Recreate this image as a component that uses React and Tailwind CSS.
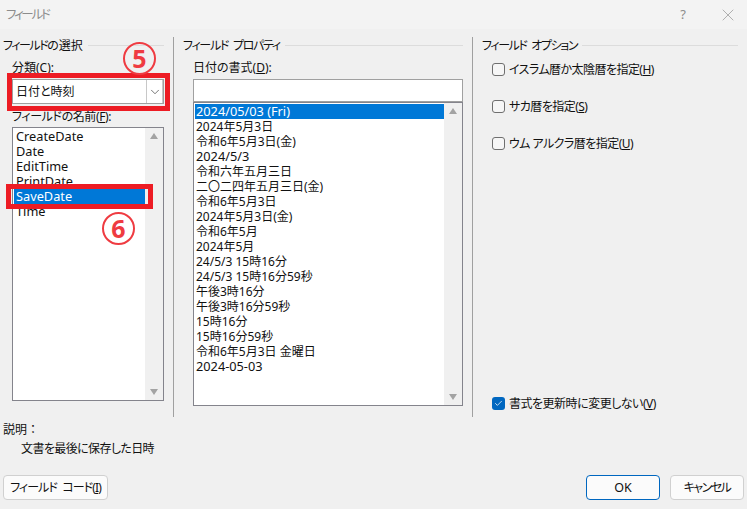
import { X, ChevronDown, Check } from 'lucide-react';

const names = ['CreateDate', 'Date', 'EditTime', 'PrintDate', 'SaveDate', 'Time'];
const formats = [
  '2024/05/03 (Fri)',
  '2024年5月3日',
  '令和6年5月3日(金)',
  '2024/5/3',
  '令和六年五月三日',
  '二〇二四年五月三日(金)',
  '令和6年5月3日',
  '2024年5月3日(金)',
  '令和6年5月',
  '2024年5月',
  '24/5/3 15時16分',
  '24/5/3 15時16分59秒',
  '午後3時16分',
  '午後3時16分59秒',
  '15時16分',
  '15時16分59秒',
  '令和6年5月3日 金曜日',
  '2024-05-03',
];

function GroupTitle({ children }) {
  return (
    <div className="flex h-[15px] items-center gap-[5px]">
      <span className="whitespace-nowrap">{children}</span>
      <span className="h-px flex-1 bg-[#dcdcdc]" />
    </div>
  );
}

function ScrollBar() {
  return (
    <div className="flex w-[18px] flex-col items-center justify-between bg-[#f0f0f0] py-[5px]">
      <span className="h-0 w-0 border-x-[4px] border-b-[6px] border-x-transparent border-b-[#a3a3a3]" />
      <span className="h-0 w-0 border-x-[4px] border-t-[6px] border-x-transparent border-t-[#a3a3a3]" />
    </div>
  );
}

function Option({ label, keyName, className = '' }) {
  return (
    <div className={`flex h-[15px] items-center gap-[4px] ${className}`}>
      <span className="h-[13px] w-[13px] rounded-[3px] border border-[#6f6f6f] bg-[#f6f6f6]" />
      <span className="whitespace-nowrap tracking-[-0.55px]">
        {label}(<u>{keyName}</u>)
      </span>
    </div>
  );
}

export default function App() {
  return (
    <div className="relative h-[509px] w-[747px] overflow-hidden bg-[#f0f0f0] text-[12px] leading-[15px] text-[#111] [font-family:'Noto_Sans','Noto_Sans_CJK_JP',sans-serif] [font-feature-settings:'palt']">
      {/* title bar */}
      <div className="flex h-[29px] items-center justify-between bg-[#f3f3f3] pl-[6px] pr-[9px]">
        <span className="text-[12.5px] tracking-[-2.2px] text-[#8c8c8c]">フィールド</span>
        <div className="flex items-center gap-[32px] text-[#8c8c8c]">
          <span className="text-[13px]">?</span>
          <X className="h-[20px] w-[20px]" strokeWidth={0.8} />
        </div>
      </div>

      <div className="flex h-[388px] pt-[8px]">
        {/* left */}
        <div className="w-[173px] pl-[3px] pr-[9px] pt-[1px]">
          <GroupTitle>
            <span className="tracking-[-1.5px]">フィールド</span>の選択
          </GroupTitle>
          <div className="pl-[9px] pt-[7px]">
            <div className="h-[15px]">
              分類(<u>C</u>):
            </div>
            <div className="mt-[4px] flex h-[25px] w-[152px] items-center justify-between border border-[#a0a0a0] bg-white pl-[3px]">
              <span className="-mt-[1px]">日付と時刻</span>
              <span className="flex h-[23px] w-[17px] items-center justify-center border-x border-[#c8c8c8]">
                <ChevronDown className="h-[14px] w-[14px] text-[#444]" strokeWidth={1.25} />
              </span>
            </div>
            <div className="mt-[5px] h-[15px] tracking-[-0.4px]">
              フィールドの名前(<u>F</u>):
            </div>
            <div className="mt-[3px] flex h-[274px] w-[152px] border border-[#84848c] bg-white">
              <div className="flex-1 pl-[1px] pt-[1px]">
                {names.map((name) => (
                  <div
                    key={name}
                    className={`h-[15px] pl-[2px] text-[12.75px] leading-[15px] ${name === 'SaveDate' ? 'bg-[#0078d7] text-white' : ''}`}
                  >
                    {name}
                  </div>
                ))}
              </div>
              <ScrollBar />
            </div>
          </div>
        </div>

        {/* middle */}
        <div className="h-[380px] w-[299px] border-l border-[#a0a0a0] pl-[9px] pr-[9px] pt-[1px]">
          <GroupTitle>
            <span className="tracking-[-1.3px] [word-spacing:3px]">フィールド プロパティ</span>
          </GroupTitle>
          <div className="pl-[10px] pt-[7px]">
            <div className="h-[15px]">
              日付の書式(<u>D</u>):
            </div>
            <div className="mt-[4px] h-[23px] w-[270px] border border-[#a0a0a0] bg-white" />
            <div className="flex h-[304px] w-[270px] border border-[#84848c] bg-white">
              <div className="flex-1 pl-[1px] pt-[1px]">
                {formats.map((format, i) => (
                  <div
                    key={format}
                    className={`h-[15px] pl-[1px] ${i === 0 || i === 3 || i === 17 ? 'text-[12.75px] leading-[14px]' : 'leading-[16px]'} ${i === 0 ? 'bg-[#0078d7] text-white' : ''}`}
                  >
                    {format}
                  </div>
                ))}
              </div>
              <ScrollBar />
            </div>
          </div>
        </div>

        {/* right */}
        <div className="h-[380px] flex-1 border-l border-[#a0a0a0] pl-[9px] pr-[9px] pt-[1px]">
          <GroupTitle>
            <span className="tracking-[-1.4px] [word-spacing:3px]">フィールド オプション</span>
          </GroupTitle>
          <div className="flex h-[365px] flex-col pl-[10px] pt-[9px]">
            <Option label="イスラム暦か太陰暦を指定" keyName="H" />
            <Option label="サカ暦を指定" keyName="S" className="mt-[22px]" />
            <Option label="ウム アルクラ暦を指定" keyName="U" className="mt-[22px]" />
            <div className="mt-[245px] flex h-[15px] items-center gap-[4px]">
              <span className="flex h-[13px] w-[13px] items-center justify-center rounded-[3px] bg-[#0067c0]">
                <Check className="h-[9px] w-[9px] text-white" strokeWidth={2} />
              </span>
              <span className="whitespace-nowrap tracking-[-0.5px]">
                書式を更新時に変更しない(<u>V</u>)
              </span>
            </div>
          </div>
        </div>
      </div>

      {/* description */}
      <div className="pl-[3px] pt-[5px]">
        <div className="h-[15px] [font-feature-settings:normal]">説明：</div>
        <div className="mt-[4px] h-[15px] pl-[18px] tracking-[-0.6px]">文書を最後に保存した日時</div>
      </div>

      {/* buttons */}
      <div className="mt-[19px] flex items-center justify-between pl-[3px] pr-[3px]">
        <button className="h-[25px] w-[105px] whitespace-nowrap rounded-[4px] border border-[#d0d0d0] bg-[#fbfbfb] tracking-[-0.9px] [word-spacing:3px]">
          フィールド コード(<u>I</u>)
        </button>
        <div className="flex gap-[10px]">
          <button className="h-[25px] w-[74px] rounded-[4px] border border-[#0067c0] bg-[#fbfbfb] text-[12.5px]">OK</button>
          <button className="h-[25px] w-[74px] rounded-[4px] border border-[#d0d0d0] bg-[#fbfbfb] tracking-[-1.5px]">キャンセル</button>
        </div>
      </div>

      {/* annotations */}
      <div className="absolute left-[7px] top-[73px] h-[38px] w-[163px] border-[5px] border-[#ed1c24]" />
      <div className="absolute left-[6px] top-[184px] h-[25px] w-[147px] border-[5px] border-[#ed1c24]" />
      <div className="absolute left-[123px] top-[42px] flex h-[33px] w-[33px] items-center justify-center rounded-full border-[2px] border-[#ef3b41] text-[25px] font-bold leading-none text-[#ef3b41]">
        5
      </div>
      <div className="absolute left-[102px] top-[212px] flex h-[33px] w-[33px] items-center justify-center rounded-full border-[2px] border-[#ef3b41] text-[25px] font-bold leading-none text-[#ef3b41]">
        6
      </div>
    </div>
  );
}
